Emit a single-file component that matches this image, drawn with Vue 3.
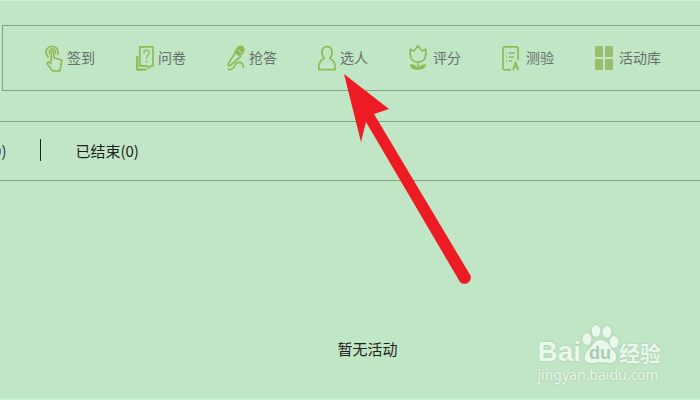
<template>
  <main class="page">
    <nav class="toolbar">
      <button
        v-for="tool in tools"
        :key="tool.name"
        type="button"
        class="tool"
        :class="{ wide: tool.wide }"
      >
        <svg v-if="tool.name === 'sign'" class="icon" viewBox="0 0 18 28">
          <path d="M3.6 13.2A6 6 0 1 1 12.4 11" />
          <path d="M5.2 10.2A3.2 3.2 0 1 1 10 9.8" stroke-width="1.2" />
          <path d="M6.2 18V8.2c0-1.8 2.6-1.8 2.6 0V14l6 1.3c1.5.3 2 1 1.8 2.3l-.8 5.4-1 3.8H7.4L2.6 20.4c-1-1.7.8-3 1.9-2L6.4 20" />
        </svg>
        <svg v-else-if="tool.name === 'survey'" class="icon" viewBox="0 0 18 28">
          <path d="M3.8 2.8h13.2v19h-2.4l-2 2.4-2-2.4h-6.8z" />
          <path d="M1.2 12v13.6h9.3" stroke-width="2.2" />
          <path d="M7.8 9.2c0-4 5.4-3.7 5.4-.4 0 2.5-2.7 2.8-2.7 6M10.5 16.6v2" stroke-width="1.3" />
        </svg>
        <svg v-else-if="tool.name === 'answer'" class="icon" viewBox="0 0 18 28">
          <ellipse cx="13" cy="6.6" rx="3.6" ry="4.5" transform="rotate(25 13 6.6)" fill="#91b954" />
          <path d="M9.2 7 1.4 19.6c-.9 1.8.6 3 2 1.8L14.2 12" />
          <path d="M.8 25.4c4.2 1.2 5.7-1.2 7.2-4.3 2.4-4.5 8.4-3.5 8.4 2.6" />
          <path d="m10.8 5.6 4.4 4" stroke="#c1e6c6" stroke-width="1" />
        </svg>
        <svg v-else-if="tool.name === 'pick'" class="icon" viewBox="0 0 18 28">
          <path d="M6.3 14.3C3.8 12 3.7 8.9 4.2 6.5c1.2-5.3 8.4-5.3 9.6 0 .5 2.4.4 5.5-2.1 7.8 2.9 1.4 5 4 5.4 7.2v4.2H.9v-4.2c.4-3.2 2.5-5.8 5.4-7.2z" />
        </svg>
        <svg v-else-if="tool.name === 'score'" class="icon" viewBox="0 0 18 28">
          <path d="M1.2 5.2 4.8 7 9 1.8 13.2 7l3.6-1.8c.3 6.5 0 12.8-7.8 12.8S.9 11.7 1.2 5.2zM9 18v8" />
          <path d="M1 20.2c4.5 0 7 1.5 8 5 1-3.5 3.5-5 8-5-.3 4-3.5 5.5-8 5.5s-7.7-1.5-8-5.5z" fill="#91b954" stroke="none" />
        </svg>
        <svg v-else-if="tool.name === 'quiz'" class="icon" viewBox="0 0 18 28">
          <path d="M9 25.8H3c-1.3 0-2-.6-2-1.8V4.6c0-1.2.7-1.8 2-1.8h11c1.3 0 2 .6 2 1.8V16" />
          <path d="M7 9h6M7 13h5M7 17h3M4 9h1M4 13h1M4 17h1" stroke-width="1.4" />
          <path d="m11 26.2 2.5-8 2.8 8M12 23h3.6" />
        </svg>
        <svg v-else class="icon solid" viewBox="0 0 18 28">
          <rect x="0" y="2" width="8" height="11" rx="1" />
          <rect x="10" y="2" width="8" height="11" rx="1" />
          <rect x="0" y="15" width="8" height="11" rx="1" />
          <rect x="10" y="15" width="8" height="11" rx="1" />
        </svg>
        <span>{{ tool.label }}</span>
      </button>
    </nav>

    <div class="tabs">
      <a href="#" class="tab active">(0)</a>
      <span class="divider"></span>
      <a href="#" class="tab">已结束(0)</a>
    </div>

    <p class="empty">暂无活动</p>

    <svg class="arrow" viewBox="0 0 130 214">
      <path d="M1 1 46 36 31 41 126 200a5 5 0 0 1-9 9L23 49 18 69z" />
    </svg>

    <div class="watermark">
      <div class="brand">
        <span class="bai">Bai</span>
        <span class="paw">
          <svg viewBox="0 0 38 40">
            <ellipse cx="6" cy="15" rx="4.5" ry="6" />
            <ellipse cx="15" cy="7" rx="4.5" ry="6" />
            <ellipse cx="26" cy="8" rx="4.5" ry="6" />
            <ellipse cx="33" cy="18" rx="4.5" ry="6" />
            <path d="M20 16c7 0 8 6 12 10 6 6 3 14-4 13-5-1-11-1-16 0C3 40 1 32 7 26c5-4 6-10 13-10z" />
          </svg>
          <span class="du">du</span>
        </span>
        <span class="jingyan">经验</span>
      </div>
      <div class="site">jingyan.baidu.com</div>
    </div>
  </main>
</template>

<script setup>
import { ref } from 'vue';

const tools = ref([
  { name: 'sign', label: '签到' },
  { name: 'survey', label: '问卷' },
  { name: 'answer', label: '抢答' },
  { name: 'pick', label: '选人' },
  { name: 'score', label: '评分', wide: true },
  { name: 'quiz', label: '测验', wide: true },
  { name: 'library', label: '活动库', wide: true },
]);
</script>

<style>
body {
  background: #c1e6c6;
}
</style>

<style scoped>
.page {
  position: relative;
  box-sizing: border-box;
  min-height: 100vh;
  padding-top: 24px;
  overflow: hidden;
  border: 1px solid #c8f3cf;
  border-width: 1px 0 2px;
  color: #1c221d;
  font-family: "Noto Sans CJK SC", sans-serif;
}

.toolbar {
  display: flex;
  align-items: center;
  gap: 41px;
  height: 64px;
  margin-left: 2px;
  padding-left: 42px;
  border: 1px solid #85a18a;
  border-right: 0;
}

.tool {
  display: flex;
  flex: none;
  align-items: center;
  gap: 4px;
  padding: 0;
  border: 0;
  background: none;
  color: #667169;
  font-family: inherit;
  font-size: 14px;
  line-height: 26px;
  cursor: pointer;
}

.tool span {
  padding-bottom: 2px;
}

.tool.wide {
  gap: 6px;
}

.icon {
  width: 18px;
  height: 28px;
  fill: none;
  stroke: #91b954;
  stroke-width: 1.7;
  stroke-linejoin: round;
}

.icon.solid {
  fill: #98bd6c;
  stroke: none;
}

.tabs {
  display: flex;
  align-items: center;
  box-sizing: border-box;
  height: 60px;
  margin-top: 30px;
  padding-bottom: 2px;
  border-top: 1px solid #85a18a;
  border-bottom: 1px solid #85a18a;
  font-size: 15px;
}

.tab {
  color: inherit;
  text-decoration: none;
}

.tab.active {
  margin-left: -12px;
  color: #26346b;
}

.divider {
  height: 22px;
  margin: 0 34px;
  border-left: 1px solid #1c221d;
}

.empty {
  margin: 155px 0 0;
  padding-left: 35px;
  font-size: 15px;
  line-height: 26px;
  text-align: center;
}

.arrow {
  position: absolute;
  top: 72px;
  left: 343px;
  width: 130px;
  height: 214px;
  fill: #ed1c24;
}

.watermark {
  position: absolute;
  right: 39px;
  bottom: 12px;
  color: #eaf7ec;
  text-shadow: 0 0 2px #9dbea2;
}

.brand {
  display: flex;
  align-items: flex-end;
  height: 40px;
}

.bai {
  font-family: "Liberation Sans", sans-serif;
  font-size: 28px;
  font-weight: bold;
  line-height: 24px;
}

.paw {
  position: relative;
  width: 38px;
  height: 40px;
}

.paw svg {
  width: 38px;
  height: 40px;
  fill: #eaf7ec;
  filter: drop-shadow(0 0 1px #9dbea2);
}

.du {
  position: absolute;
  right: 0;
  bottom: 1px;
  left: 0;
  color: #a9cdae;
  font-family: "Liberation Sans", sans-serif;
  font-size: 18px;
  font-weight: bold;
  line-height: 20px;
  text-align: center;
  text-shadow: none;
}

.jingyan {
  font-size: 21px;
  font-weight: bold;
  line-height: 24px;
}

.site {
  font-family: "Noto Sans", sans-serif;
  font-size: 14px;
  line-height: 22px;
}
</style>
